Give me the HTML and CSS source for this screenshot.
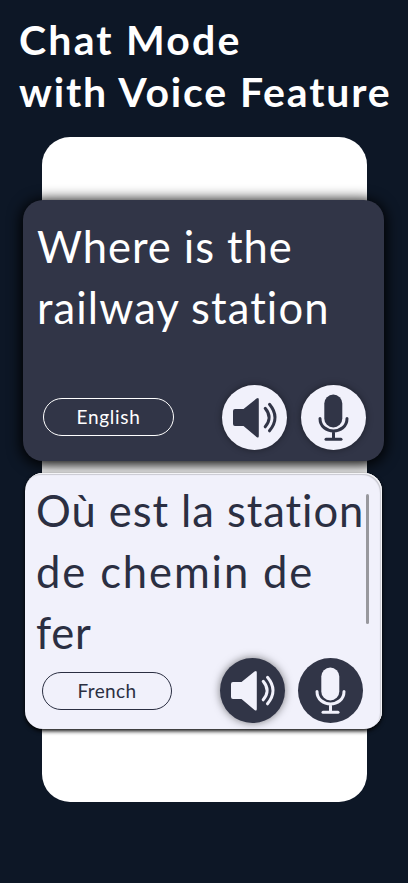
FILE: index.html
```html
<!DOCTYPE html>
<html lang="en">
<head>
    <meta charset="UTF-8">
    <meta name="viewport" content="width=device-width, initial-scale=1.0">
    <title>Chat Mode</title>
    <link rel="stylesheet" href="styles.css">
</head>
<body>
    <svg class="sprite">
        <symbol id="speaker" viewBox="0 0 65 65">
            <path class="fill" d="M13 24h8.500L34.500 13.600Q36.800 12 36.800 14.500V51Q36.800 53.500 34.500 51.900L21.500 41H13Q11 41 11 39V26Q11 24 13 24Z"/>
            <path class="line" d="M43.200 23.300Q51 32.500 43.200 41.800M47.500 19.300Q58.500 32.500 47.500 45.800"/>
        </symbol>
        <symbol id="mic" viewBox="0 0 65 65">
            <rect class="fill" x="23.300" y="9.500" width="18" height="33" rx="9"/>
            <path class="line" d="M19 33.500C19 50 46 50 46 33.500M32.500 46V53.500"/>
            <path class="line" d="M25 54.200H40"/>
        </symbol>
    </svg>

    <h1 class="title">
        <span class="t1">Chat Mode</span>
        <span class="t2">with Voice Feature</span>
    </h1>

    <div class="phone">
        <div class="card dark">
            <p class="message" lang="en">
                <span class="m1">Where is the</span>
                <span class="m2">railway station</span>
            </p>
            <div class="controls">
                <button class="lang">English</button>
                <button class="round speak" aria-label="Listen"><svg><use href="#speaker"/></svg></button>
                <button class="round" aria-label="Speak"><svg><use href="#mic"/></svg></button>
            </div>
        </div>
        <div class="card light">
            <p class="message" lang="fr">
                <span class="m3">Où est la station</span>
                <span class="m4">de chemin de</span>
                <span class="m5">fer</span>
            </p>
            <div class="scrollbar"></div>
            <div class="controls">
                <button class="lang">French</button>
                <button class="round speak" aria-label="Listen"><svg><use href="#speaker"/></svg></button>
                <button class="round" aria-label="Speak"><svg><use href="#mic"/></svg></button>
            </div>
        </div>
    </div>
</body>
</html>
```

FILE: styles.css
```css
* {
    box-sizing: border-box;
}
body {
    margin: 0;
    height: 883px;
    overflow: hidden;
    background: #0d1726;
    font-family: Lato, "Open Sans", sans-serif;
}
.sprite {
    display: none;
}
.title {
    margin: 0;
    padding: 14px 0 0 19px;
    height: 136.5px;
    font-size: 41px;
    line-height: 51.5px;
    font-weight: 700;
    color: #fff;
}
.title span, .message span {
    display: block;
    white-space: nowrap;
}
.t1 {
    letter-spacing: 2.2px;
}
.t2 {
    letter-spacing: 1.85px;
}
.phone {
    width: 325px;
    height: 665.5px;
    margin-left: 42px;
    padding-top: 63px;
    background: #fff;
    border-radius: 28px;
}
.card {
    position: relative;
    display: flex;
    flex-direction: column;
    justify-content: space-between;
}
.dark {
    width: 361px;
    height: 261px;
    margin-left: -19px;
    padding: 16px 18px 11px 20px;
    border-radius: 20px;
    background: #313547;
    color: #fff;
    box-shadow: 0 2px 14px 2px #000;
}
.light {
    width: 357px;
    height: 256.5px;
    margin: 12px 0 0 -17px;
    padding: 7px 19px 6px 17px;
    border-radius: 18px;
    background: #f1f1fb;
    color: #2b2f42;
    box-shadow: 0 2px 4px #000, inset -1px 1px 0 #f4f4f7, inset -2px 2px 1px #c9c9d1;
}
.message {
    height: 170px;
    margin: 0 0 0 -6px;
    font-size: 43.5px;
    line-height: 61px;
}
.dark .message {
    line-height: 61.5px;
}
.m1, .m3 {
    letter-spacing: 0.95px;
}
.m2 {
    letter-spacing: 1.1px;
}
.m4 {
    letter-spacing: 1.9px;
}
.m5 {
    letter-spacing: 0.8px;
}
.controls {
    display: flex;
    align-items: center;
}
.lang {
    width: 131px;
    height: 38px;
    margin-right: auto;
    padding: 0 0 1px;
    border: 1px solid currentColor;
    border-radius: 19px;
    background: none;
    color: inherit;
    font-family: inherit;
    font-size: 19px;
    letter-spacing: 0.7px;
}
.light .lang {
    width: 130px;
    letter-spacing: 0.4px;
}
.round {
    width: 65px;
    height: 65px;
    margin-left: 14px;
    padding: 0;
    border: none;
    border-radius: 50%;
    background: #f1f1fb;
    color: #313547;
}
.light .round {
    margin-left: 13px;
    background: #313547;
    color: #f1f1fb;
}
.dark .round {
    box-shadow: 0 0 7px rgba(0, 0, 0, 0.4);
}
.light .speak {
    box-shadow: 0 0 8px rgba(0, 0, 0, 0.5);
}
.round svg {
    display: block;
    width: 65px;
    height: 65px;
}
.fill {
    fill: currentColor;
}
.line {
    fill: none;
    stroke: currentColor;
    stroke-width: 3;
    stroke-linecap: round;
}
.scrollbar {
    position: absolute;
    top: 21px;
    right: 13px;
    width: 3px;
    height: 130px;
    border-radius: 2px;
    background: #98989d;
}
```
